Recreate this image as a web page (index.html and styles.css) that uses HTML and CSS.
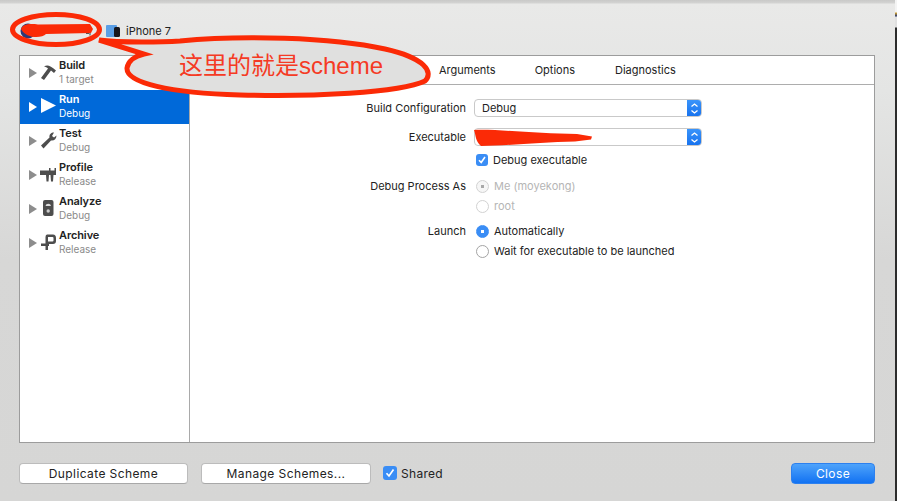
FILE: index.html
```html
<!DOCTYPE html>
<html lang="zh">
<head>
<meta charset="utf-8">
<title>Scheme</title>
<link rel="stylesheet" href="styles.css">
</head>
<body>
<div class="desktop">
  <main class="sheet">
    <header class="toolbar">
      <span class="scheme-name">
        <svg width="76" height="18" viewBox="0 0 76 18"><circle cx="9" cy="9" r="7.500" fill="#2a3a78"/><path d="M67 11.500h3M71 11v2.500" stroke="#555" stroke-width="1.200" fill="none"/></svg>
      </span>
      <svg class="device-icon" width="16" height="14" viewBox="0 0 16 14"><rect x="0" y="1" width="11" height="12" rx="1" fill="#5b9fe6"/><rect x="8" y="3" width="6" height="10" rx="1.500" fill="#17171d"/></svg>
      <span class="device-name">iPhone 7</span>
    </header>

    <section class="panel">
      <nav class="sidebar">
        <div class="action">
          <span class="disclosure"></span>
          <svg class="action-icon" width="20" height="20" viewBox="0 0 20 20"><path d="M5 3.500C8 1.500 11 2 17 7.500L15 10 12 7.500 5 17 2 15 9 5.500C8 4.500 6.500 3.500 5 3.500z" fill="#4d4d4d"/></svg>
          <span class="action-text"><b>Build</b><small>1 target</small></span>
        </div>
        <div class="action selected">
          <span class="disclosure"></span>
          <svg class="action-icon" width="20" height="20" viewBox="0 0 20 20"><path d="M2 1 17 8.500 2 16z" fill="#fff"/></svg>
          <span class="action-text"><b>Run</b><small>Debug</small></span>
        </div>
        <div class="action">
          <span class="disclosure"></span>
          <svg class="action-icon" width="20" height="20" viewBox="0 0 20 20"><path d="M15 1.500C12 1.500 10 3.500 10.500 6.500L2 14.500 4.500 17.500 12 9.500C15 10 17.500 8 17.500 4.500L15 6.500 13 5z" fill="#4d4d4d"/></svg>
          <span class="action-text"><b>Test</b><small>Debug</small></span>
        </div>
        <div class="action">
          <span class="disclosure"></span>
          <svg class="action-icon" width="20" height="20" viewBox="0 0 20 20"><path d="M1 5.500H10V3H11.500V5.500H15.500V3H17V10H14.500L14 16.500H12L11.500 10H10L9.500 16.500H7.500L7 10H1z" fill="#4d4d4d"/></svg>
          <span class="action-text"><b>Profile</b><small>Release</small></span>
        </div>
        <div class="action">
          <span class="disclosure"></span>
          <svg class="action-icon" width="20" height="20" viewBox="0 0 20 20"><rect x="4" y="1" width="10.500" height="16" rx="2" fill="#4d4d4d"/><path d="M6.500 7a2.800 2.800 0 0 1 5.500 0z" fill="#ddd"/><circle cx="9.200" cy="12" r="1.700" fill="#ccc"/></svg>
          <span class="action-text"><b>Analyze</b><small>Debug</small></span>
        </div>
        <div class="action">
          <span class="disclosure"></span>
          <svg class="action-icon" width="20" height="20" viewBox="0 0 20 20"><path fill-rule="evenodd" d="M8 1.500H14Q17 1.500 17 5V8Q17 11 14 11H10V13H9V17H6.500V13H2V10.500H6.500V4Q6.500 1.500 8 1.500zM9 4V8.500H13.500Q14.500 8.500 14.500 7.500V5Q14.500 4 13.500 4z" fill="#4d4d4d"/></svg>
          <span class="action-text"><b>Archive</b><small>Release</small></span>
        </div>
      </nav>

      <div class="content">
        <div class="tabs">
          <span class="tab tab-args">Arguments</span>
          <span class="tab tab-options">Options</span>
          <span class="tab">Diagnostics</span>
        </div>
        <div class="form">
          <div class="row row-popup">
            <label class="row-label">Build Configuration</label>
            <div class="popup"><span class="popup-value">Debug</span><span class="stepper"><svg width="9" height="13" viewBox="0 0 9 13"><path d="M1.500 4.500 4.500 2l3 2.500M1.500 8.500l3 2.500 3-2.500" fill="none" stroke="#fff" stroke-width="1.300"/></svg></span></div>
          </div>
          <div class="row row-popup row-exec">
            <label class="row-label">Executable</label>
            <div class="popup"><span class="popup-value"></span><span class="stepper"><svg width="9" height="13" viewBox="0 0 9 13"><path d="M1.500 4.500 4.500 2l3 2.500M1.500 8.500l3 2.500 3-2.500" fill="none" stroke="#fff" stroke-width="1.300"/></svg></span></div>
          </div>
          <div class="row row-check">
            <span class="row-label"></span>
            <span class="check"><svg width="12" height="12" viewBox="0 0 12 12"><path d="M3 6.200 5.200 8.500 9 3" fill="none" stroke="#fff" stroke-width="1.600"/></svg></span>
            <span class="opt-text">Debug executable</span>
          </div>
          <div class="row row-radio row-process">
            <span class="row-label">Debug Process As</span>
            <span class="radio radio-dis-on"></span>
            <span class="opt-text dim">Me (moyekong)</span>
          </div>
          <div class="row row-radio">
            <span class="row-label"></span>
            <span class="radio radio-dis"></span>
            <span class="opt-text dim">root</span>
          </div>
          <div class="row row-radio row-launch">
            <span class="row-label">Launch</span>
            <span class="radio radio-on"></span>
            <span class="opt-text">Automatically</span>
          </div>
          <div class="row row-radio">
            <span class="row-label"></span>
            <span class="radio"></span>
            <span class="opt-text">Wait for executable to be launched</span>
          </div>
        </div>
      </div>
    </section>

    <footer class="footer">
      <button class="btn btn-dup">Duplicate Scheme</button>
      <button class="btn btn-manage">Manage Schemes...</button>
      <span class="check check-shared"><svg width="14" height="14" viewBox="0 0 14 14"><path d="M3.500 7.200 6 10l4.500-6.500" fill="none" stroke="#fff" stroke-width="1.700"/></svg></span>
      <span class="shared">Shared</span>
      <button class="btn btn-close">Close</button>
    </footer>
  </main>
  <div class="edge"></div>

  <svg class="markup" width="897" height="501" viewBox="0 0 897 501">
    <ellipse cx="56" cy="29.500" rx="43.500" ry="15" fill="none" stroke="#fb2a06" stroke-width="5"/>
    <path d="M21 29C22 25 28 23 38 24.500L90 24 93 29 91 33 46 34C42 38.500 26 39 21 29Z" fill="#fb2a06"/>
    <path d="M99 40C120 43 165 42 180 41C240 35 330 37 385 49C425 58 434 72 425 81C400 93 310 97 240 95C170 93 126 83 127 68C128 61 135 56 144 54Z" fill="#e0e0df" stroke="#fb2a06" stroke-width="5" stroke-linejoin="miter"/>
    <path d="M474 130C500 129 540 134 577 134L592 136.500 591 139.500 575 141.500C540 142 505 146 481 146C475 141 476 135 474 130Z" fill="#fb2a06"/>
  </svg>
  <span class="note">这里的就是scheme</span>
</div>
</body>
</html>
```

FILE: styles.css
```css
* { box-sizing: border-box; }
html, body { margin: 0; padding: 0; }
body {
  width: 897px;
  height: 501px;
  overflow: hidden;
  font-family: "Inter", "Liberation Sans", sans-serif;
  font-size: 11px;
  color: #222;
  background: #fff;
}
.desktop {
  position: relative;
  display: flex;
  width: 897px;
  height: 501px;
}
.sheet {
  width: 895px;
  height: 501px;
  display: flex;
  flex-direction: column;
  padding: 0 20px 0 19px;
  background: linear-gradient(#c9c9c8 0, #d3d3d2 3px, #e9e9e8 4px, #e4e5e4 90px, #d7d7d6 260px, #d6d6d5 100%);
}
.edge {
  flex: 1;
  background: linear-gradient(#f4f4f4 0, #f4f4f4 12px, #d0a030 13px, #2a3a70 16px, #e0e0e0 17px, #e0e0e0 27px, #2c2c2c 28px);
}

/* toolbar */
.toolbar {
  height: 55px;
  display: flex;
  align-items: center;
  padding: 7px 0 0 0;
}
.scheme-name {
  width: 87px;
  display: flex;
  align-items: center;
}
.device-icon { margin-right: 4px; }
.device-name { font-size: 11px; }

/* main panel */
.panel {
  height: 388px;
  display: flex;
  background: #fff;
  border: 1px solid #9c9c9c;
}
.sidebar {
  width: 170px;
  flex: none;
  border-right: 1px solid #a9a9a9;
}
.action {
  height: 34px;
  display: flex;
  align-items: center;
  padding-left: 9px;
}
.disclosure {
  width: 0;
  height: 0;
  border-left: 8px solid #8d8d8d;
  border-top: 5px solid transparent;
  border-bottom: 5px solid transparent;
  margin-right: 2px;
}
.action-icon { flex: none; }
.action-text {
  display: flex;
  flex-direction: column;
  padding-bottom: 2px;
  line-height: 14px;
}
.action-text b { font-weight: 600; font-size: 11px; color: #222; letter-spacing: -0.1px; }
.action-text small { font-size: 10px; color: #8a8a8a; }
.selected { background: #0069d9; }
.selected .disclosure { border-left-color: #fff; }
.selected b, .selected small { color: #fff; }

/* right side */
.content { flex: 1; display: flex; flex-direction: column; }
.tabs {
  height: 29px;
  flex: none;
  display: flex;
  align-items: center;
  padding: 0 0 0 249px;
  border-bottom: 1px solid #adadad;
  font-size: 11px;
}
.tab-args { margin-right: 39px; }
.tab-options { margin-right: 40px; }

.form { display: flex; flex-direction: column; padding-top: 13px; }
.row { display: flex; align-items: center; height: 20px; }
.row-label {
  width: 276px;
  flex: none;
  text-align: right;
}
.row-exec { margin-top: 9px; }
.row-popup .popup { margin-left: 8px; }
.popup {
  width: 228px;
  height: 18px;
  display: flex;
  align-items: center;
  justify-content: space-between;
  background: #fff;
  border: 1px solid #c9c9c9;
  border-radius: 4px;
  padding-left: 7px;
  overflow: hidden;
}
.stepper {
  width: 15px;
  height: 18px;
  margin-right: -1px;
  display: flex;
  align-items: center;
  justify-content: center;
  background: linear-gradient(#3c96fb, #1671ee);
}
.row-check { margin-top: 3px; }
.check {
  width: 12px;
  height: 12px;
  margin-left: 10px;
  flex: none;
  display: flex;
  background: #3a8df5;
  border-radius: 3px;
}
.opt-text { margin-left: 5px; }
.dim { color: #b5b5b5; }
.row-process { margin-top: 6px; }
.row-launch { margin-top: 5px; }
.radio {
  width: 13px;
  height: 13px;
  margin-left: 10px;
  flex: none;
  border: 1px solid #a4a4a4;
  border-radius: 50%;
  background: #fff;
}
.radio-dis { border-color: #d2d2d2; }
.radio-dis-on {
  border-color: #d2d2d2;
  background: radial-gradient(circle, #a8a8a8 0 1.500px, #f6f6f6 2px);
}
.radio-on {
  border-color: #3a8df5;
  background: radial-gradient(circle, #fff 0 1.500px, #3a8df5 2px);
}

/* footer */
.footer {
  flex: 1;
  display: flex;
  align-items: center;
  padding-top: 2px;
}
.btn {
  width: 169px;
  height: 21px;
  font-family: inherit;
  font-size: 12px;
  letter-spacing: 0.4px;
  color: #222;
  background: #fff;
  border: 1px solid #bcbcbc;
  border-bottom-color: #a8a8a8;
  border-radius: 4px;
  padding: 0;
}
.btn-dup { margin-right: 13px; }
.btn-manage { width: 170px; }
.check-shared {
  width: 14px;
  height: 14px;
  margin-left: 12px;
}
.shared { margin-left: 4px; font-size: 12px; letter-spacing: 0.3px; }
.btn-close {
  width: 84px;
  margin-left: auto;
  color: #fff;
  background: linear-gradient(#4ea3fb, #1272f2);
  border: 1px solid #2c80ef;
}

/* hand-drawn annotation on top of the screenshot */
.markup { position: absolute; left: 0; top: 0; pointer-events: none; }
.note {
  position: absolute;
  left: 179px;
  top: 52px;
  font-family: "Liberation Sans", "Noto Sans CJK SC", sans-serif;
  font-size: 24px;
  line-height: 28px;
  color: #f53a24;
  white-space: nowrap;
}
```
